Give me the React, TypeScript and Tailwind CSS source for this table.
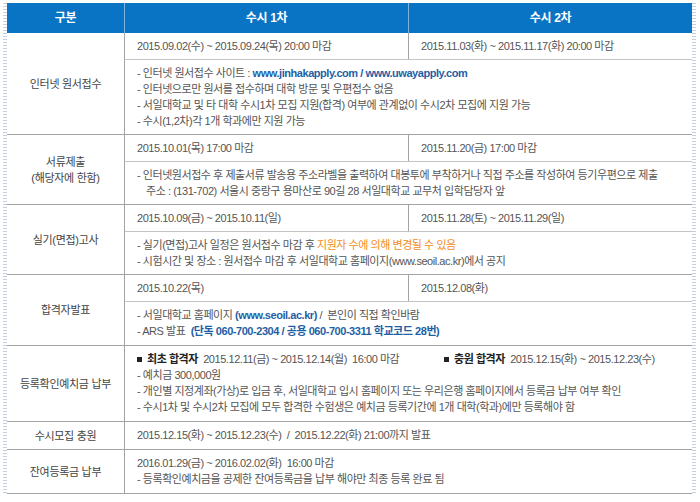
import type { ReactNode } from "react";

const link = "font-bold text-[#1f5fa6]";
const warn = "text-[#f28c1e]";

function Square() {
  return <span className="mr-[5px] inline-block h-[5px] w-[5px] translate-y-[-1px] bg-[#222]" />;
}

function Row({
  label,
  dates,
  tall,
  children,
}: {
  label: ReactNode;
  dates?: [ReactNode, ReactNode];
  tall?: boolean;
  children: ReactNode;
}) {
  return (
    <div className="flex border-b border-[#a3a3a3]">
      <div className="flex w-[118px] shrink-0 items-center justify-center border-r border-[#a3a3a3] text-center text-[11px] leading-4 tracking-[-0.3px] text-[#444]">
        {label}
      </div>
      <div className="flex min-w-0 flex-1 flex-col">
        {dates ? (
          <div className="grid grid-cols-[284px_1fr] border-b border-[#c4c4c4]">
            <div className="border-r border-[#a3a3a3] px-3 py-[5px]">{dates[0]}</div>
            <div className="px-3 py-[5px]">{dates[1]}</div>
          </div>
        ) : null}
        <div className={tall ? "px-3 pt-[5px] pb-[6px]" : "px-3 py-[5px]"}>{children}</div>
      </div>
    </div>
  );
}

function Strip() {
  return (
    <div className="w-[4px] shrink-0 bg-[image:repeating-linear-gradient(to_bottom,#c3d0e4_0px,#c3d0e4_1px,transparent_1px,transparent_3px)]" />
  );
}

export default function App() {
  return (
    <div className="h-[502px] w-[700px] overflow-hidden bg-white pt-[3px] font-['Liberation_Sans','Noto_Sans_CJK_KR',sans-serif] text-[11px] leading-4 tracking-[-0.45px] text-[#555]">
      <div className="ml-[3px] flex">
        <Strip />
        <div className="w-[685px]">
          <div className="grid h-[30px] grid-cols-[118px_284px_1fr] bg-[#0a74c4] text-[12px] font-bold tracking-[-0.3px] text-white">
            <div className="flex items-center justify-center border-r border-[#7db3de]">구분</div>
            <div className="flex items-center justify-center border-r border-[#7db3de]">수시 1차</div>
            <div className="flex items-center justify-center">수시 2차</div>
          </div>

          <Row
            label="인터넷 원서접수"
            dates={["2015.09.02(수) ~ 2015.09.24(목) 20:00 마감", "2015.11.03(화) ~ 2015.11.17(화) 20:00 마감"]}
          >
            <p>
              - 인터넷 원서접수 사이트 : <span className={link}>www.jinhakapply.com / www.uwayapply.com</span>
            </p>
            <p>- 인터넷으로만 원서를 접수하며 대학 방문 및 우편접수 없음</p>
            <p>- 서일대학교 및 타 대학 수시1차 모집 지원(합격) 여부에 관계없이 수시2차 모집에 지원 가능</p>
            <p>- 수시(1,2차)각 1개 학과에만 지원 가능</p>
          </Row>

          <Row
            label={
              <span>
                서류제출
                <br />
                (해당자에 한함)
              </span>
            }
            dates={["2015.10.01(목) 17:00 마감", "2015.11.20(금) 17:00 마감"]}
          >
            <p>- 인터넷원서접수 후 제출서류 발송용 주소라벨을 출력하여 대봉투에 부착하거나 직접 주소를 작성하여 등기우편으로 제출</p>
            <p className="pl-[9px]">주소 : (131-702) 서울시 중랑구 용마산로 90길 28 서일대학교 교무처 입학담당자 앞</p>
          </Row>

          <Row label="실기(면접)고사" dates={["2015.10.09(금) ~ 2015.10.11(일)", "2015.11.28(토) ~ 2015.11.29(일)"]}>
            <p>
              - 실기(면접)고사 일정은 원서접수 마감 후 <span className={warn}>지원자 수에 의해 변경될 수 있음</span>
            </p>
            <p>- 시험시간 및 장소 : 원서접수 마감 후 서일대학교 홈페이지(www.seoil.ac.kr)에서 공지</p>
          </Row>

          <Row label="합격자발표" dates={["2015.10.22(목)", "2015.12.08(화)"]} tall>
            <p className="whitespace-pre">
              - 서일대학교 홈페이지 <span className={link}>(www.seoil.ac.kr)</span> /  본인이 직접 확인바람
            </p>
            <p className="whitespace-pre">
              - ARS 발표  <span className={link}>(단독 060-700-2304 / 공용 060-700-3311 학교코드 28번)</span>
            </p>
          </Row>

          <Row label="등록확인예치금 납부" tall>
            <div className="flex whitespace-pre">
              <span className="w-[307px] shrink-0">
                <Square />
                <b className="font-bold text-[#222]">최초 합격자</b>  2015.12.11(금) ~ 2015.12.14(월)  16:00 마감
              </span>
              <span>
                <Square />
                <b className="font-bold text-[#222]">충원 합격자</b>  2015.12.15(화) ~ 2015.12.23(수)
              </span>
            </div>
            <p>- 예치금 300,000원</p>
            <p>- 개인별 지정계좌(가상)로 입금 후, 서일대학교 입시 홈페이지 또는 우리은행 홈페이지에서 등록금 납부 여부 확인</p>
            <p>- 수시1차 및 수시2차 모집에 모두 합격한 수험생은 예치금 등록기간에 1개 대학(학과)에만 등록해야 함</p>
          </Row>

          <Row label="수시모집 충원" tall>
            <p className="whitespace-pre">2015.12.15(화) ~ 2015.12.23(수)  /  2015.12.22(화) 21:00까지 발표</p>
          </Row>

          <Row label="잔여등록금 납부" tall>
            <p className="whitespace-pre">2016.01.29(금) ~ 2016.02.02(화)  16:00 마감</p>
            <p>- 등록확인예치금을 공제한 잔여등록금을 납부 해야만 최종 등록 완료 됨</p>
          </Row>
        </div>
        <Strip />
      </div>
    </div>
  );
}
